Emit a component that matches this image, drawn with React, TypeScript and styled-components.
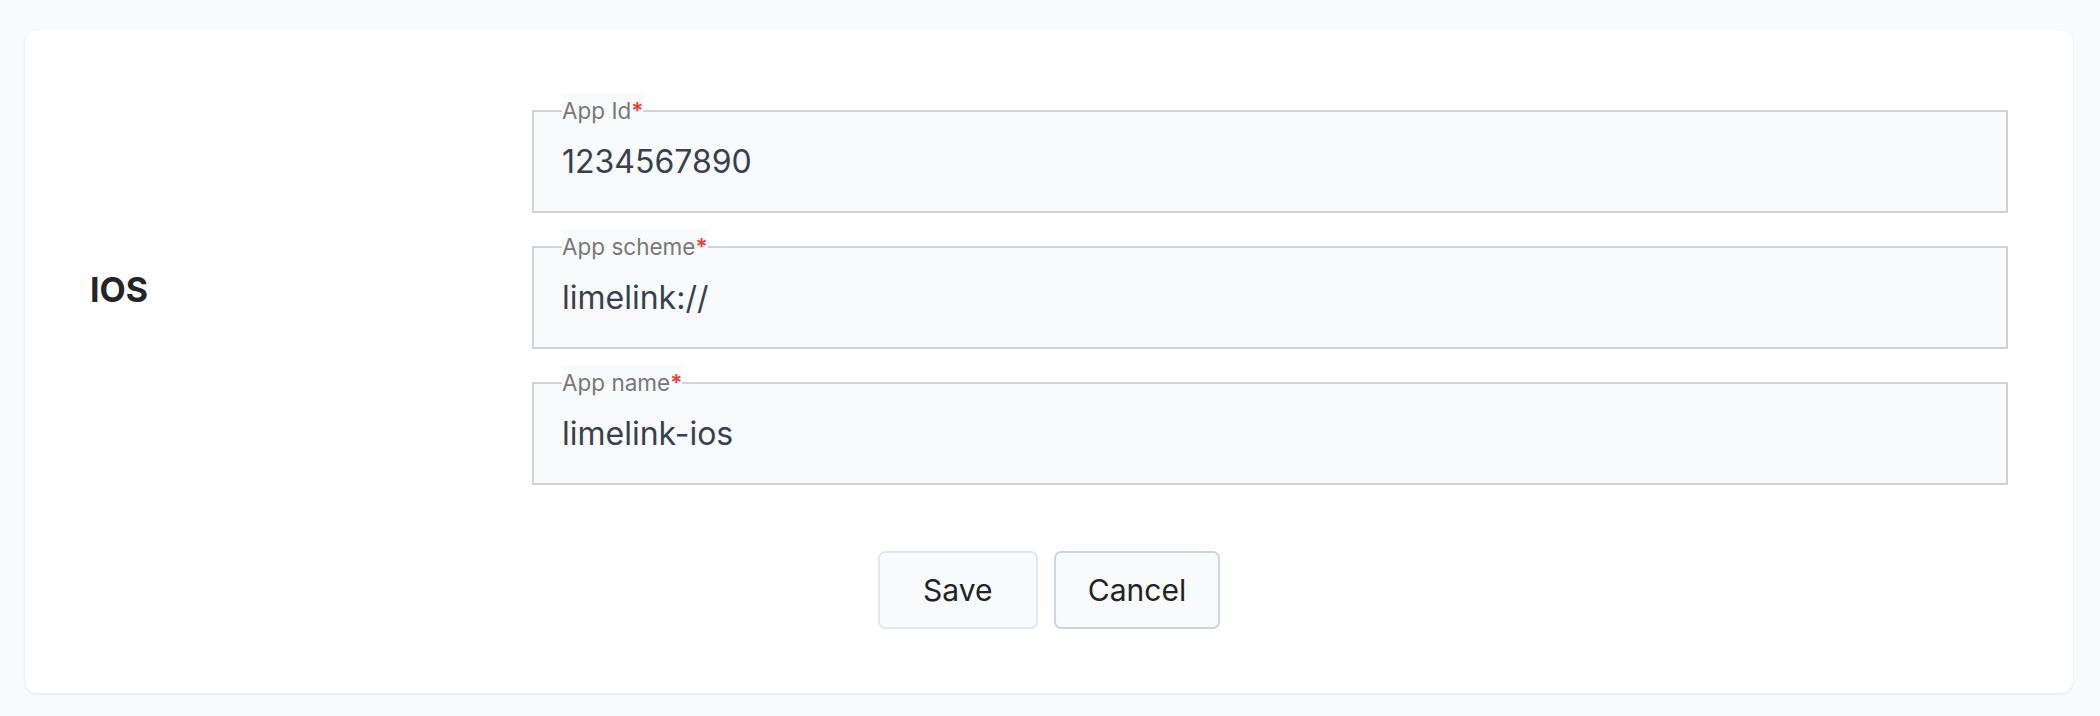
import React from "react";
import styled, { createGlobalStyle } from "styled-components";

const GlobalStyle = createGlobalStyle`
  html, body {
    margin: 0;
    padding: 0;
    background: #f9fafb;
    font-family: Inter, "Noto Sans", "Liberation Sans", sans-serif;
  }
  * { box-sizing: border-box; }
`;

const Page = styled.div`
  padding: 30px 27px 23px 25px;
  background: #f9fafb;
  min-height: 716px;
`;

const Card = styled.section`
  background: #ffffff;
  border-radius: 12px;
  box-shadow: 0 1px 3px rgba(15, 23, 42, 0.08), 0 0 1px rgba(15, 23, 42, 0.08);
  padding: 63px 65px 64px 65px;
`;

const FormRow = styled.div`
  display: grid;
  grid-template-columns: 442px 1fr;
  align-items: center;
`;

const SectionTitle = styled.h2`
  margin: 0;
  font-size: 34px;
  font-weight: 700;
  color: #212529;
  line-height: normal;
`;

const Fields = styled.div`
  display: flex;
  flex-direction: column;
  gap: 16px;
`;

const Fieldset = styled.fieldset`
  margin: 0;
  min-width: 0;
  border: 2px solid #d2d2d2;
  background: #f9fafb;
  padding: 0 28px;
`;

const Legend = styled.legend`
  padding: 0;
  font-size: 22.5px;
  line-height: 36px;
  color: #787878;
  background: #f9fafb;
`;

const Required = styled.span`
  color: #ef3b3b;
  font-weight: 600;
`;

const ValueInput = styled.input`
  display: block;
  width: 100%;
  height: 82px;
  border: none;
  outline: none;
  background: transparent;
  padding: 14px 0 32px 0;
  margin: 0;
  font-family: Inter, "Noto Sans", "Liberation Sans", sans-serif;
  font-size: 32px;
  line-height: 36px;
  color: #374151;
`;

const Actions = styled.div`
  display: flex;
  justify-content: center;
  gap: 16px;
  margin-top: 66px;
`;

const Button = styled.button<{ $strong?: boolean }>`
  min-width: 160px;
  height: 78px;
  padding: 0 32px;
  border-radius: 7px;
  border: 2px solid ${(p) => (p.$strong ? "#cdd4dd" : "#e3e8ee")};
  background: #f8fafc;
  color: #212529;
  font-family: Inter, "Noto Sans", "Liberation Sans", sans-serif;
  font-size: 30px;
  cursor: pointer;
`;

type FieldProps = { label: string; value: string };

const Field = ({ label, value }: FieldProps) => (
  <Fieldset>
    <Legend>
      {label}
      <Required>*</Required>
    </Legend>
    <ValueInput defaultValue={value} readOnly />
  </Fieldset>
);

export default function App() {
  return (
    <>
      <GlobalStyle />
      <Page>
        <Card>
          <FormRow>
            <SectionTitle>IOS</SectionTitle>
            <Fields>
              <Field label="App Id" value="1234567890" />
              <Field label="App scheme" value="limelink://" />
              <Field label="App name" value="limelink-ios" />
            </Fields>
          </FormRow>
          <Actions>
            <Button>Save</Button>
            <Button $strong>Cancel</Button>
          </Actions>
        </Card>
      </Page>
    </>
  );
}
